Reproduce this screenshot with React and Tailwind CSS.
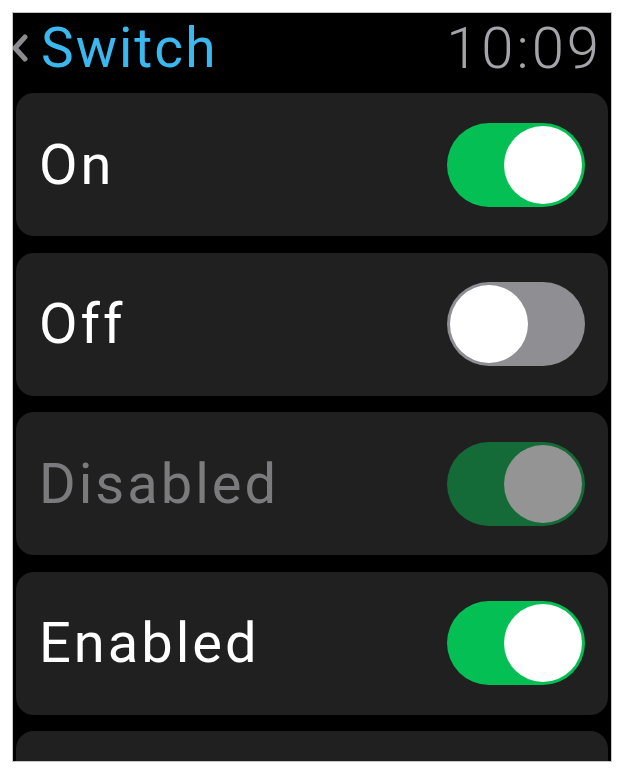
import React from "react";

const rows = [
  { label: "On", state: "on" },
  { label: "Off", state: "off" },
  { label: "Disabled", state: "disabled" },
  { label: "Enabled", state: "on" },
  { label: "", state: "none" },
];

function Toggle({ state }) {
  if (state === "none") return null;
  const track =
    state === "on" ? "bg-[#04bf53]" : state === "off" ? "bg-[#8e8e93]" : "bg-[#156b37]";
  const knob = state === "disabled" ? "bg-[#949494]" : "bg-white";
  return (
    <div className={`flex h-[84px] w-[138px] items-center rounded-full px-[3px] ${track} ${state === "off" ? "justify-start" : "justify-end"}`}>
      <div className={`h-[78px] w-[78px] rounded-full ${knob}`} />
    </div>
  );
}

export default function App() {
  return (
    <div className="min-h-screen bg-white p-3" style={{ fontFamily: "Roboto, 'Noto Sans', sans-serif" }}>
      <div className="flex h-[750px] w-[600px] flex-col overflow-hidden border border-[#c4c4c4] bg-black">
        <header className="flex h-[80px] shrink-0 items-center justify-between pb-[10px] pr-[9px]">
          <div className="flex items-center">
            <svg width="28" height="30" viewBox="0 0 28 30" className="-ml-[2px]">
              <polyline points="14,4 4,15 14,26" fill="none" stroke="#8c8c8e" strokeWidth="5" strokeLinecap="round" strokeLinejoin="round" />
            </svg>
            <span className="pl-[2px] text-[55px] leading-none tracking-[2px] text-[#3ab8f0]">Switch</span>
          </div>
          <span className="text-[58px] font-light leading-none tracking-[3px] text-[#a4a4a9]">10:09</span>
        </header>
        <div className="flex flex-col gap-[16.5px] px-[3px]">
          {rows.map((r, i) => (
            <div key={i} className="flex h-[143px] shrink-0 items-center justify-between rounded-[18px] bg-[#202020] pl-[23px] pr-[23px]">
              <span className={`text-[56px] leading-none tracking-[3px] ${r.state === "disabled" ? "text-[#7b7b7d]" : "text-white"}`}>{r.label}</span>
              <Toggle state={r.state} />
            </div>
          ))}
        </div>
      </div>
    </div>
  );
}
